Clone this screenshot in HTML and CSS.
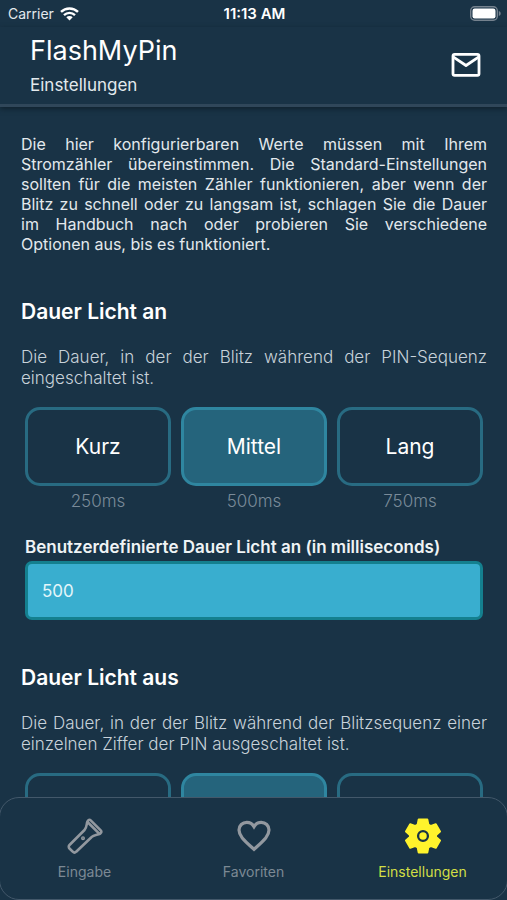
FILE: index.html
```html
<!DOCTYPE html>
<html lang="de">
<head>
<meta charset="utf-8">
<meta name="viewport" content="width=device-width, initial-scale=1">
<title>FlashMyPin</title>
<link rel="stylesheet" href="styles.css">
</head>
<body>
<div class="status">
  <div class="carrier">Carrier
    <svg width="19" height="14" viewBox="0 0 19 14" fill="none" stroke="#fff" stroke-width="2.4" aria-hidden="true"><path d="M1 4.9a12.2 12.2 0 0 1 17 0M4 8.1a8 8 0 0 1 11 0"/><path d="M6.3 10.3a4.6 4.6 0 0 1 6.4 0L9.500 13.600z" fill="#fff" stroke="none"/></svg>
  </div>
  <div class="time">11:13 AM</div>
  <div class="battery">
    <svg width="31" height="15" viewBox="0 0 31 15" aria-hidden="true"><rect x=".7" y=".7" width="26.600" height="13.600" rx="4" fill="none" stroke="#75828e" stroke-width="1.400"/><rect x="2.500" y="2.500" width="23" height="10" rx="2.200" fill="#fff"/><path d="M28.800 5v5c1.400-.5 1.900-1.500 1.900-2.500s-.5-2-1.900-2.500z" fill="#75828e"/></svg>
  </div>
</div>
<header class="header">
  <div>
    <h1>FlashMyPin</h1>
    <p class="subtitle">Einstellungen</p>
  </div>
  <button class="mail" type="button" aria-label="Nachricht">
    <svg width="30" height="24" viewBox="0 0 30 24" fill="none" stroke="#fff" stroke-width="2.800" stroke-linejoin="round" aria-hidden="true"><rect x="2" y="1.400" width="26" height="21" rx="1.600"/><path d="M2.500 4.200 15 12.500 27.500 4.200"/></svg>
  </button>
</header>
<main class="content">
  <p class="intro">Die hier konfigurierbaren Werte müssen mit Ihrem Stromzähler übereinstimmen. Die Standard-Einstellungen sollten für die meisten Zähler funktionieren, aber wenn der Blitz zu schnell oder zu langsam ist, schlagen Sie die Dauer im Handbuch nach oder probieren Sie verschiedene Optionen aus, bis es funktioniert.</p>
  <section class="setting">
    <h2>Dauer Licht an</h2>
    <p class="desc">Die Dauer, in der der Blitz während der PIN-Sequenz eingeschaltet ist.</p>
    <div class="options">
      <div class="option"><button type="button">Kurz</button><span>250ms</span></div>
      <div class="option"><button type="button" class="selected">Mittel</button><span>500ms</span></div>
      <div class="option"><button type="button">Lang</button><span>750ms</span></div>
    </div>
    <div class="field">
      <label for="on-time">Benutzerdefinierte Dauer Licht an (in milliseconds)</label>
      <input id="on-time" type="text" inputmode="numeric" value="500">
    </div>
  </section>
  <section class="setting">
    <h2>Dauer Licht aus</h2>
    <p class="desc">Die Dauer, in der der Blitz während der Blitzsequenz einer einzelnen Ziffer der PIN ausgeschaltet ist.</p>
    <div class="options">
      <div class="option"><button type="button" aria-label="Kurz"></button></div>
      <div class="option"><button type="button" class="selected" aria-label="Mittel"></button></div>
      <div class="option"><button type="button" aria-label="Lang"></button></div>
    </div>
  </section>
</main>
<nav class="tabs">
  <a href="#eingabe">
    <svg width="36" height="36" viewBox="0 0 36 36" fill="none" stroke="currentColor" stroke-width="2.600" stroke-linejoin="round" stroke-linecap="round" aria-hidden="true"><path d="M23.700 2.300 33.700 12.300c.9.900.9 1.900 0 2.700l-.8.800c-2.600 1.300-6 .900-8.500 3.400L9.200 33.700c-1 1-2.500 1-3.500 0l-3.200-3.200c-1-1-1-2.500 0-3.500L17.500 12c2.500-2.500 1.800-5.900 3-8.600l.8-1.100c.8-.8 1.600-.8 2.400 0zM21 4.500 31.700 15.200"/><circle cx="16" cy="20.200" r=".7" fill="currentColor"/></svg>
    Eingabe
  </a>
  <a href="#favoriten">
    <svg width="36" height="36" viewBox="0 0 36 36" fill="none" stroke="currentColor" stroke-width="3.200" stroke-linejoin="miter" aria-hidden="true"><path d="M18 31.300 15.700 29.200C7.500 21.800 3 17.500 3 12 3 7.500 6.500 4.400 10.800 4.400c2.800 0 5.500 1.300 7.200 4.200 1.700-2.900 4.400-4.200 7.200-4.200C29.500 4.400 33 7.500 33 12c0 5.500-4.500 9.800-12.700 17.200z"/></svg>
    Favoriten
  </a>
  <a href="#einstellungen" class="active" aria-current="page">
    <svg width="36" height="36" viewBox="0 0 36 36" aria-hidden="true"><g fill="currentColor" stroke="currentColor" stroke-width="2" stroke-linejoin="round"><path d="M13.700 1.400h8.600l1 5.100 2.700 1.500 4.800-1.700 4.200 7.300-3.900 3.400v2l3.900 3.400-4.200 7.300L26 28l-2.700 1.500-1 5.100h-8.600l-1-5.100L10 28l-4.800 1.700L1 22.400 4.900 19v-2L1 13.600l4.200-7.300L10 8l2.700-1.500z"/></g><circle cx="18" cy="18" r="4.900" fill="none" stroke="#193346" stroke-width="2.300"/></svg>
    Einstellungen
  </a>
</nav>
</body>
</html>
```
FILE: styles.css
```css
* {
  box-sizing: border-box;
}

body {
  margin: 0;
  height: 100vh;
  display: flex;
  flex-direction: column;
  overflow: hidden;
  background: #193346;
  color: #fff;
  font-family: Inter, "Liberation Sans", sans-serif;
}

h1, h2, p {
  margin: 0;
}

button, input {
  font: inherit;
  color: inherit;
}

.status {
  display: grid;
  grid-template-columns: 1fr auto 1fr;
  align-items: center;
  height: 27px;
  padding: 0 6px 0 8px;
  font-size: 14px;
}

.carrier {
  display: flex;
  align-items: center;
  gap: 6px;
  color: #e3e9ed;
}

.time {
  font-size: 15px;
  font-weight: 600;
}

.battery {
  display: flex;
  justify-content: flex-end;
}

.header {
  display: flex;
  align-items: center;
  justify-content: space-between;
  height: 80px;
  padding: 0 26px 2px 30px;
  border-bottom: 3px solid #30475a;
  box-shadow: 0 2px 5px #10222e;
}

h1 {
  font-size: 27px;
  line-height: 36px;
  font-weight: 400;
}

.subtitle {
  margin-top: 4px;
  font-size: 17px;
  line-height: 24px;
  color: #e3e9ed;
}

.mail {
  display: flex;
  padding: 0;
  border: 0;
  background: none;
}

.content {
  flex: 1;
  min-height: 0;
  overflow: hidden;
  padding: 27px 20px 0 21px;
}

.intro {
  font-size: 16px;
  line-height: 20px;
  text-align: justify;
  color: #e3e9ed;
}

.setting {
  margin-top: 44px;
}

h2 {
  font-size: 21px;
  line-height: 28px;
  font-weight: 600;
}

.desc {
  margin-top: 21px;
  font-size: 17px;
  line-height: 21px;
  font-weight: 300;
  text-align: justify;
  color: #c8d2da;
}

.options {
  display: grid;
  grid-template-columns: repeat(3, 1fr);
  gap: 10px;
  margin: 18px 4px 0;
}

.option {
  display: flex;
  flex-direction: column;
  gap: 5px;
  text-align: center;
  font-size: 17px;
  line-height: 20px;
  font-weight: 300;
  color: #7a8b99;
}

.option button {
  height: 79px;
  border: 3px solid #286b82;
  border-radius: 15px;
  background: transparent;
  color: #fff;
  font-size: 21px;
  font-weight: 400;
}

.option .selected {
  background: #25647c;
  border-color: #2f86a0;
}

.field {
  display: flex;
  flex-direction: column;
  gap: 4px;
  margin: 26px 4px 0;
}

.field label {
  font-size: 17px;
  line-height: 20px;
  font-weight: 600;
  color: #eff3f5;
}

.field input {
  width: 100%;
  height: 59px;
  padding: 0 14px;
  border: 3px solid #14808f;
  border-radius: 7px;
  background: #39aecf;
  color: #e3f6fa;
  font-size: 17px;
}

.tabs {
  display: grid;
  grid-template-columns: repeat(3, 1fr);
  flex: none;
  margin: 0 -1px;
  padding: 20px 0 17px;
  border: 1px solid #43586a;
  border-radius: 20px;
  background: #193346;
}

.tabs a {
  display: flex;
  flex-direction: column;
  align-items: center;
  gap: 8px;
  font-size: 14px;
  line-height: 20px;
  color: #7c8994;
  text-decoration: none;
}

.tabs svg {
  color: #92989f;
}

.tabs .active {
  color: #d2df45;
}

.tabs .active svg {
  color: #fff32c;
}
```
